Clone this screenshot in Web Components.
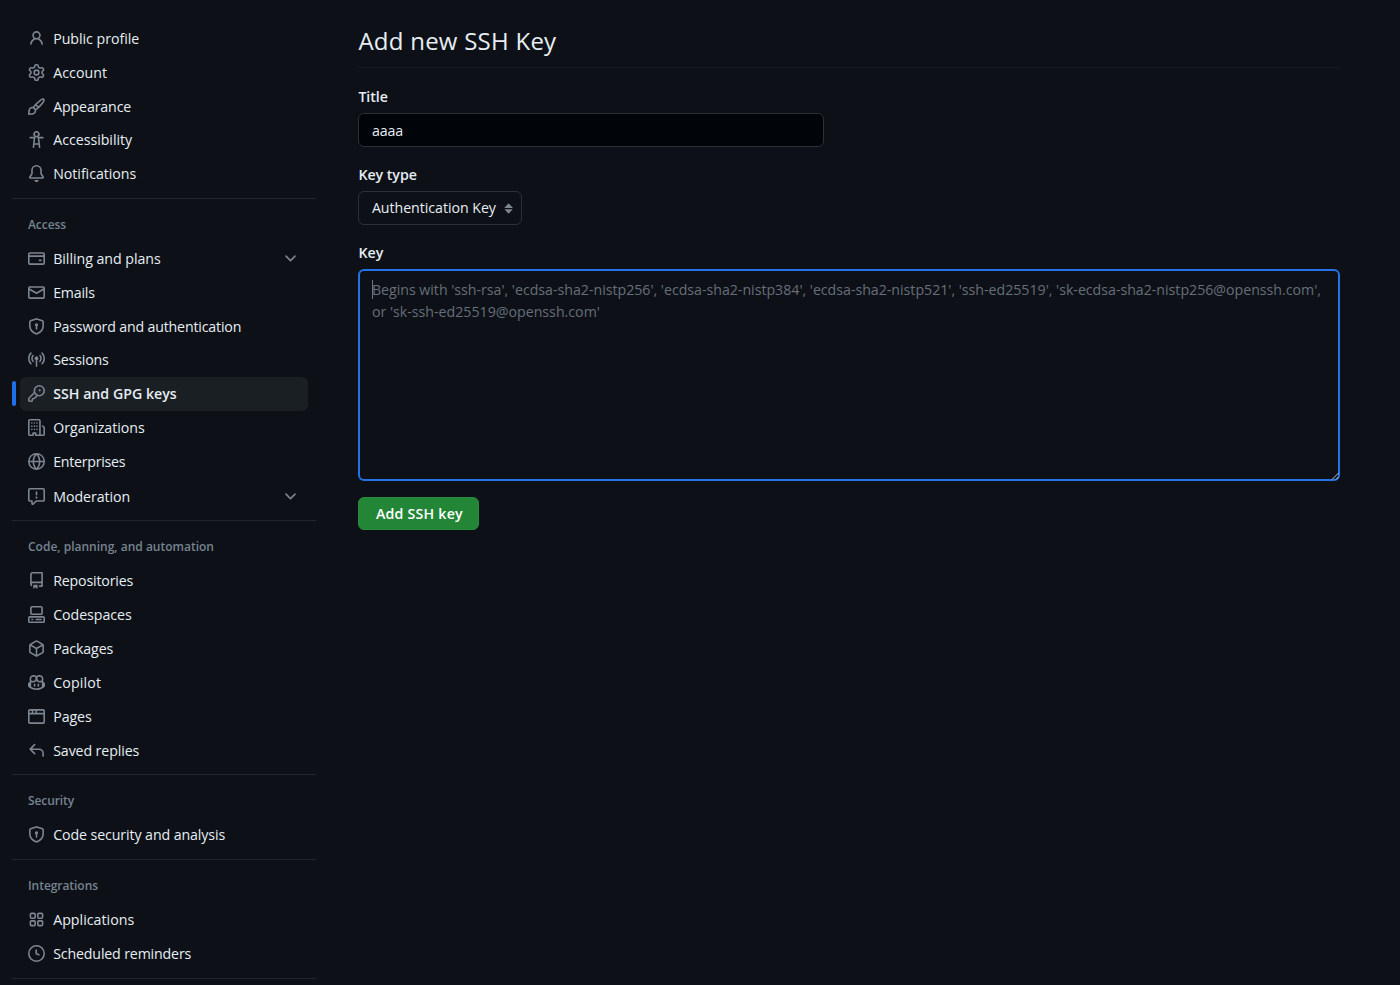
<!DOCTYPE html>
<html lang="en">
<head>
<meta charset="utf-8">
<title>Add new SSH key</title>
<style>
  body {
    margin: 0;
    height: 985px;
    overflow: hidden;
    background: #0d1117;
    color: #e6edf3;
    font-family: "Open Sans", "Noto Sans", sans-serif;
    font-size: 14.2px;
  }
</style>
</head>
<body>
<settings-page>
  <settings-nav slot="nav">
    <nav-group>
      <nav-item icon="person" fit="86">Public profile</nav-item>
      <nav-item icon="gear" fit="54">Account</nav-item>
      <nav-item icon="paintbrush" fit="78">Appearance</nav-item>
      <nav-item icon="accessibility" fit="79">Accessibility</nav-item>
      <nav-item icon="bell" fit="83">Notifications</nav-item>
    </nav-group>
    <nav-group heading="Access" fit="38">
      <nav-item icon="credit-card" fit="107.5" expandable>Billing and plans</nav-item>
      <nav-item icon="mail" fit="41.5">Emails</nav-item>
      <nav-item icon="shield-lock" fit="188">Password and authentication</nav-item>
      <nav-item icon="broadcast" fit="55.5">Sessions</nav-item>
      <nav-item icon="key" fit="123.5" current>SSH and GPG keys</nav-item>
      <nav-item icon="organization" fit="91.5">Organizations</nav-item>
      <nav-item icon="globe" fit="72">Enterprises</nav-item>
      <nav-item class="last" icon="report" fit="77" expandable>Moderation</nav-item>
    </nav-group>
    <nav-group heading="Code, planning, and automation" fit="186">
      <nav-item icon="repo" fit="80">Repositories</nav-item>
      <nav-item icon="codespaces" fit="78.5">Codespaces</nav-item>
      <nav-item icon="package" fit="60">Packages</nav-item>
      <nav-item icon="copilot" fit="48">Copilot</nav-item>
      <nav-item icon="browser" fit="38.5">Pages</nav-item>
      <nav-item icon="reply" fit="86">Saved replies</nav-item>
    </nav-group>
    <nav-group heading="Security" fit="46">
      <nav-item icon="shield-lock" fit="172">Code security and analysis</nav-item>
    </nav-group>
    <nav-group heading="Integrations" fit="70">
      <nav-item icon="apps" fit="81">Applications</nav-item>
      <nav-item icon="clock" fit="138">Scheduled reminders</nav-item>
    </nav-group>
  </settings-nav>
  <ssh-key-form></ssh-key-form>
</settings-page>

<script>
const ICONS = {
  "person": "M10.561 8.073a6.005 6.005 0 0 1 3.432 5.142.75.75 0 1 1-1.498.07 4.5 4.5 0 0 0-8.99 0 .75.75 0 0 1-1.498-.07 6.004 6.004 0 0 1 3.431-5.142 3.999 3.999 0 1 1 5.123 0ZM10.5 5a2.5 2.5 0 1 0-5 0 2.5 2.5 0 0 0 5 0Z",
  "gear": "M8 0a8.2 8.2 0 0 1 .701.031C9.444.095 9.99.645 10.16 1.29l.288 1.107c.018.066.079.158.212.224.231.114.454.243.668.386.123.082.233.09.299.071l1.103-.303c.644-.176 1.392.021 1.82.63.27.385.506.792.704 1.218.315.675.111 1.422-.364 1.891l-.814.806c-.049.048-.098.147-.088.294.016.257.016.515 0 .772-.01.147.038.246.088.294l.814.806c.475.469.679 1.216.364 1.891a7.977 7.977 0 0 1-.704 1.217c-.428.61-1.176.807-1.82.63l-1.102-.302c-.067-.019-.177-.011-.3.071a5.909 5.909 0 0 1-.668.386c-.133.066-.194.158-.211.224l-.29 1.106c-.168.646-.715 1.196-1.458 1.26a8.006 8.006 0 0 1-1.402 0c-.743-.064-1.289-.614-1.458-1.26l-.289-1.106c-.018-.066-.079-.158-.212-.224a5.738 5.738 0 0 1-.668-.386c-.123-.082-.233-.09-.299-.071l-1.103.303c-.644.176-1.392-.021-1.82-.63a8.12 8.12 0 0 1-.704-1.218c-.315-.675-.111-1.422.363-1.891l.815-.806c.05-.048.098-.147.088-.294a6.214 6.214 0 0 1 0-.772c.01-.147-.038-.246-.088-.294l-.815-.806C.635 6.045.431 5.298.746 4.623a7.92 7.92 0 0 1 .704-1.217c.428-.61 1.176-.807 1.82-.63l1.102.302c.067.019.177.011.3-.071.214-.143.437-.272.668-.386.133-.066.194-.158.211-.224l.29-1.106C6.009.645 6.556.095 7.299.03 7.53.01 7.764 0 8 0Zm-.571 1.525c-.036.003-.108.036-.137.146l-.289 1.105c-.147.561-.549.967-.998 1.189-.173.086-.34.183-.5.29-.417.278-.97.423-1.529.27l-1.103-.303c-.109-.03-.175.016-.195.045-.22.312-.412.644-.573.99-.014.031-.021.11.059.19l.815.806c.411.406.562.957.53 1.456a4.709 4.709 0 0 0 0 .582c.032.499-.119 1.05-.53 1.456l-.815.806c-.081.08-.073.159-.059.19.162.346.353.677.573.989.02.03.085.076.195.046l1.102-.303c.56-.153 1.113-.008 1.53.27.161.107.328.204.501.29.447.222.85.629.997 1.189l.289 1.105c.029.109.101.143.137.146a6.6 6.6 0 0 0 1.142 0c.036-.003.108-.036.137-.146l.289-1.105c.147-.561.549-.967.998-1.189.173-.086.34-.183.5-.29.417-.278.97-.423 1.529-.27l1.103.303c.109.029.175-.016.195-.045.22-.313.411-.644.573-.99.014-.031.021-.11-.059-.19l-.815-.806c-.411-.406-.562-.957-.53-1.456a4.709 4.709 0 0 0 0-.582c-.032-.499.119-1.05.53-1.456l.815-.806c.081-.08.073-.159.059-.19a6.464 6.464 0 0 0-.573-.989c-.02-.03-.085-.076-.195-.046l-1.102.303c-.56.153-1.113.008-1.53-.27a4.44 4.44 0 0 0-.501-.29c-.447-.222-.85-.629-.997-1.189l-.289-1.105c-.029-.11-.101-.143-.137-.146a6.6 6.6 0 0 0-1.142 0ZM11 8a3 3 0 1 1-6 0 3 3 0 0 1 6 0ZM9.5 8a1.5 1.5 0 1 0-3.001.001A1.5 1.5 0 0 0 9.5 8Z",
  "paintbrush": "M11.134 1.535c.7-.509 1.416-.942 2.076-1.155.649-.21 1.463-.267 2.069.34.603.601.568 1.411.368 2.07-.202.668-.624 1.39-1.125 2.096-1.011 1.424-2.496 2.987-3.775 4.249-1.098 1.084-2.132 1.839-3.04 2.3a3.744 3.744 0 0 1-1.055 3.217c-.431.431-1.065.691-1.657.861-.614.177-1.294.287-1.914.357A21.151 21.151 0 0 1 .797 16H.743a.75.75 0 0 1-.742-.743v-.054a21.25 21.25 0 0 1 .13-2.284c.067-.647.187-1.287.358-1.914.17-.591.43-1.226.86-1.657a3.746 3.746 0 0 1 3.227-1.054c.466-.893 1.225-1.907 2.314-2.982 1.271-1.255 2.833-2.75 4.245-3.777ZM1.62 13.089c-.051.464-.086.929-.104 1.395.466-.018.932-.053 1.396-.104a10.511 10.511 0 0 0 1.668-.309c.526-.151.856-.325 1.011-.48a2.25 2.25 0 1 0-3.182-3.182c-.155.155-.329.485-.48 1.01a10.515 10.515 0 0 0-.309 1.67Zm10.396-10.34c-1.224.89-2.605 2.189-3.822 3.384l1.718 1.718c1.21-1.205 2.51-2.597 3.387-3.833.47-.662.78-1.227.912-1.662.134-.444.032-.551.009-.575h-.001V1.78c-.014-.014-.113-.113-.548.027-.432.14-.995.462-1.655.942Zm-4.832 7.266-.001.001a9.859 9.859 0 0 0 1.63-1.142L7.155 7.216a9.7 9.7 0 0 0-1.161 1.607c.482.302.889.71 1.19 1.192Z",
  "accessibility": "M9.923 5.302c.063.063.122.129.178.198H14A.75.75 0 0 1 14 7h-3.3l.578 5.163.362 2.997a.75.75 0 0 1-1.49.18L9.868 13H6.132l-.282 2.34a.75.75 0 0 1-1.49-.18l.362-2.997L5.3 7H2a.75.75 0 0 1 0-1.5h3.9a2.54 2.54 0 0 1 .176-.198 3 3 0 1 1 3.847 0ZM9.2 7.073h-.001a1.206 1.206 0 0 0-2.398 0L6.305 11.5h3.39ZM9.5 3a1.5 1.5 0 1 0-3.001.001A1.5 1.5 0 0 0 9.5 3Z",
  "bell": "M8 16a2 2 0 0 0 1.985-1.75c.017-.137-.097-.25-.235-.25h-3.5c-.138 0-.252.113-.235.25A2 2 0 0 0 8 16ZM3 5a5 5 0 0 1 10 0v2.947c0 .05.015.098.042.139l1.703 2.555A1.519 1.519 0 0 1 13.482 13H2.518a1.516 1.516 0 0 1-1.263-2.36l1.703-2.554A.255.255 0 0 0 3 7.947Zm5-3.5A3.5 3.5 0 0 0 4.5 5v2.947c0 .346-.102.683-.294.97l-1.703 2.556a.017.017 0 0 0-.003.01l.001.006c0 .002.002.004.004.006l.006.004.007.001h10.964l.007-.001.006-.004.004-.006.001-.007a.017.017 0 0 0-.003-.01l-1.703-2.554a1.745 1.745 0 0 1-.294-.97V5A3.5 3.5 0 0 0 8 1.5Z",
  "credit-card": "M10.75 9a.75.75 0 0 0 0 1.5h1.5a.75.75 0 0 0 0-1.5h-1.5ZM0 3.75C0 2.784.784 2 1.75 2h12.5c.966 0 1.75.784 1.75 1.75v8.5A1.75 1.75 0 0 1 14.25 14H1.75A1.75 1.75 0 0 1 0 12.25ZM14.5 6.5h-13v5.75c0 .138.112.25.25.25h12.5a.25.25 0 0 0 .25-.25Zm0-2.75a.25.25 0 0 0-.25-.25H1.75a.25.25 0 0 0-.25.25V5h13Z",
  "mail": "M1.75 2h12.5c.966 0 1.75.784 1.75 1.75v8.5A1.75 1.75 0 0 1 14.25 14H1.75A1.75 1.75 0 0 1 0 12.25v-8.5C0 2.784.784 2 1.75 2ZM1.5 12.251c0 .138.112.25.25.25h12.5a.25.25 0 0 0 .25-.25V5.809L8.38 9.397a.75.75 0 0 1-.76 0L1.5 5.809v6.442Zm13-8.181v-.32a.25.25 0 0 0-.25-.25H1.75a.25.25 0 0 0-.25.25v.32L8 7.88Z",
  "shield-lock": "m8.533.133 5.25 1.68A1.75 1.75 0 0 1 15 3.48V7c0 1.566-.32 3.182-1.303 4.682-.983 1.498-2.585 2.813-5.032 3.855a1.697 1.697 0 0 1-1.33 0c-2.447-1.042-4.049-2.357-5.032-3.855C1.32 10.182 1 8.566 1 7V3.48a1.75 1.75 0 0 1 1.217-1.667l5.25-1.68a1.748 1.748 0 0 1 1.066 0Zm-.61 1.429.001.001-5.25 1.68a.251.251 0 0 0-.174.237V7c0 1.36.275 2.666 1.057 3.859.784 1.194 2.121 2.342 4.366 3.298a.196.196 0 0 0 .154 0c2.245-.957 3.582-2.103 4.366-3.297C13.225 9.666 13.5 8.358 13.5 7V3.48a.25.25 0 0 0-.174-.238l-5.25-1.68a.25.25 0 0 0-.153 0ZM9.5 6.5c0 .536-.286 1.032-.75 1.3v2.45a.75.75 0 0 1-1.5 0V7.8A1.5 1.5 0 1 1 9.5 6.5Z",
  "broadcast": "M8.75 8.582v5.668a.75.75 0 0 1-1.5 0V8.582a1.75 1.75 0 1 1 1.5 0Zm3.983-7.125a.75.75 0 0 1 1.06.026A7.976 7.976 0 0 1 16 7c0 2.139-.84 4.083-2.207 5.517a.75.75 0 1 1-1.086-1.034A6.474 6.474 0 0 0 14.5 7a6.474 6.474 0 0 0-1.793-4.483.75.75 0 0 1 .026-1.06Zm-9.466 0c.3.286.312.76.026 1.06A6.474 6.474 0 0 0 1.5 7a6.47 6.47 0 0 0 1.793 4.483.75.75 0 0 1-1.086 1.034A7.973 7.973 0 0 1 0 7c0-2.139.84-4.083 2.207-5.517a.75.75 0 0 1 1.06-.026Zm8.556 2.321A4.988 4.988 0 0 1 13 7a4.988 4.988 0 0 1-1.177 3.222.75.75 0 1 1-1.146-.967A3.487 3.487 0 0 0 11.5 7c0-.86-.309-1.645-.823-2.255a.75.75 0 0 1 1.146-.967Zm-6.492.958A3.48 3.48 0 0 0 4.5 7a3.48 3.48 0 0 0 .823 2.255.75.75 0 0 1-1.146.967A4.981 4.981 0 0 1 3 7a4.982 4.982 0 0 1 1.188-3.236.75.75 0 1 1 1.143.972Z",
  "organization": "M1.75 16A1.75 1.75 0 0 1 0 14.25V1.75C0 .784.784 0 1.75 0h8.5C11.216 0 12 .784 12 1.75v12.5c0 .085-.006.168-.018.25h2.268a.25.25 0 0 0 .25-.25V8.285a.25.25 0 0 0-.111-.208l-1.055-.703a.749.749 0 1 1 .832-1.248l1.055.703c.487.325.779.871.779 1.456v5.965A1.75 1.75 0 0 1 14.25 16h-3.5a.766.766 0 0 1-.197-.026c-.099.017-.2.026-.303.026h-3a.75.75 0 0 1-.75-.75V14h-1v1.25a.75.75 0 0 1-.75.75Zm-.25-1.75c0 .138.112.25.25.25H4v-1.25a.75.75 0 0 1 .75-.75h2.5a.75.75 0 0 1 .75.75v1.25h2.25a.25.25 0 0 0 .25-.25V1.75a.25.25 0 0 0-.25-.25h-8.5a.25.25 0 0 0-.25.25Z",
  "globe": "M8 0a8 8 0 1 1 0 16A8 8 0 0 1 8 0ZM5.78 8.75a9.64 9.64 0 0 0 1.363 4.177c.255.426.542.832.857 1.215.245-.296.551-.705.857-1.215A9.64 9.64 0 0 0 10.22 8.75Zm4.44-1.5a9.64 9.64 0 0 0-1.363-4.177c-.307-.51-.612-.919-.857-1.215a9.927 9.927 0 0 0-.857 1.215A9.64 9.64 0 0 0 5.78 7.25Zm-5.944 1.5H1.543a6.507 6.507 0 0 0 4.666 5.5c-.123-.181-.24-.365-.352-.552-.715-1.192-1.437-2.874-1.581-4.948Zm-2.733-1.5h2.733c.144-2.074.866-3.756 1.58-4.948.12-.197.237-.381.353-.552a6.507 6.507 0 0 0-4.666 5.5Zm10.181 1.5c-.144 2.074-.866 3.756-1.58 4.948-.12.197-.237.381-.353.552a6.507 6.507 0 0 0 4.666-5.5Zm2.733-1.5a6.507 6.507 0 0 0-4.666-5.5c.123.181.24.365.353.552.714 1.192 1.436 2.874 1.58 4.948Z",
  "report": "M0 1.75C0 .784.784 0 1.75 0h12.5C15.216 0 16 .784 16 1.75v9.5A1.75 1.75 0 0 1 14.25 13H8.06l-2.573 2.573A1.458 1.458 0 0 1 3 14.543V13H1.75A1.75 1.75 0 0 1 0 11.25Zm1.75-.25a.25.25 0 0 0-.25.25v9.5c0 .138.112.25.25.25h2a.75.75 0 0 1 .75.75v2.19l2.72-2.72a.749.749 0 0 1 .53-.22h6.5a.25.25 0 0 0 .25-.25v-9.5a.25.25 0 0 0-.25-.25Zm7 2.25v2.5a.75.75 0 0 1-1.5 0v-2.5a.75.75 0 0 1 1.5 0ZM9 9a1 1 0 1 1-2 0 1 1 0 0 1 2 0Z",
  "repo": "M2 2.5A2.5 2.5 0 0 1 4.5 0h8.75a.75.75 0 0 1 .75.75v12.5a.75.75 0 0 1-.75.75h-2.5a.75.75 0 0 1 0-1.5h1.75v-2h-8a1 1 0 0 0-.714 1.7.75.75 0 1 1-1.072 1.05A2.495 2.495 0 0 1 2 11.5Zm10.5-1h-8a1 1 0 0 0-1 1v6.708A2.486 2.486 0 0 1 4.5 9h8ZM5 12.25a.25.25 0 0 1 .25-.25h3.5a.25.25 0 0 1 .25.25v3.25a.25.25 0 0 1-.4.2l-1.45-1.087a.249.249 0 0 0-.3 0L5.4 15.7a.25.25 0 0 1-.4-.2Z",
  "codespaces": "M0 11.25c0-.966.784-1.75 1.75-1.75h12.5c.966 0 1.75.784 1.75 1.75v3A1.75 1.75 0 0 1 14.25 16H1.75A1.75 1.75 0 0 1 0 14.25Zm2-9.5C2 .784 2.784 0 3.75 0h8.5C13.216 0 14 .784 14 1.75v5a1.75 1.75 0 0 1-1.75 1.75h-8.5A1.75 1.75 0 0 1 2 6.75Zm1.75-.25a.25.25 0 0 0-.25.25v5c0 .138.112.25.25.25h8.5a.25.25 0 0 0 .25-.25v-5a.25.25 0 0 0-.25-.25Zm-2 9.5a.25.25 0 0 0-.25.25v3c0 .138.112.25.25.25h12.5a.25.25 0 0 0 .25-.25v-3a.25.25 0 0 0-.25-.25ZM7 12.75a.75.75 0 0 1 .75-.75h4.5a.75.75 0 0 1 0 1.5h-4.5a.75.75 0 0 1-.75-.75Zm-4 0a.75.75 0 0 1 .75-.75h.5a.75.75 0 0 1 0 1.5h-.5a.75.75 0 0 1-.75-.75Z",
  "package": "m8.878.392 5.25 3.045c.54.314.872.89.872 1.514v6.098a1.75 1.75 0 0 1-.872 1.514l-5.25 3.045a1.75 1.75 0 0 1-1.756 0l-5.25-3.045A1.75 1.75 0 0 1 1 11.049V4.951c0-.624.332-1.201.872-1.514L7.122.392a1.75 1.75 0 0 1 1.756 0ZM7.875 1.69l-4.63 2.685L8 7.133l4.755-2.758-4.63-2.685a.248.248 0 0 0-.25 0ZM2.5 5.677v5.372c0 .09.047.171.125.216l4.625 2.683V8.432Zm6.25 8.271 4.625-2.683a.25.25 0 0 0 .125-.216V5.677L8.75 8.432Z",
  "copilot": "M7.998 15.035c-4.562 0-7.873-2.914-7.998-3.749V9.338c.085-.628.677-1.686 1.588-2.065.013-.07.024-.143.036-.218.029-.183.06-.384.126-.612-.201-.508-.254-1.084-.254-1.656 0-.87.128-1.769.693-2.484.579-.733 1.494-1.124 2.724-1.261 1.206-.134 2.262.034 2.944.765.05.053.096.108.139.165.044-.057.094-.112.143-.165.682-.731 1.738-.899 2.944-.765 1.23.137 2.145.528 2.724 1.261.566.715.693 1.614.693 2.484 0 .572-.053 1.148-.254 1.656.066.228.098.429.126.612.012.076.024.148.037.218.924.385 1.522 1.471 1.591 2.095v1.872c0 .766-3.351 3.795-8.002 3.795Zm0-1.485c2.28 0 4.584-1.11 5.002-1.433V7.862l-.023-.116c-.49.21-1.075.291-1.727.291-1.146 0-2.059-.327-2.71-.991A3.222 3.222 0 0 1 8 6.303a3.24 3.24 0 0 1-.544.743c-.65.664-1.563.991-2.71.991-.652 0-1.236-.081-1.727-.291l-.023.116v4.255c.419.323 2.722 1.433 5.002 1.433ZM6.762 2.83c-.193-.206-.637-.413-1.682-.297-1.019.113-1.479.404-1.713.7-.247.312-.369.789-.369 1.554 0 .793.129 1.171.308 1.371.162.181.519.379 1.442.379.853 0 1.339-.235 1.638-.54.315-.322.527-.827.617-1.553.117-.935-.037-1.395-.241-1.614Zm4.155-.297c-1.044-.116-1.488.091-1.681.297-.204.219-.359.679-.242 1.614.091.726.303 1.231.618 1.553.299.305.784.54 1.638.54.922 0 1.28-.198 1.442-.379.179-.2.308-.578.308-1.371 0-.765-.123-1.242-.37-1.554-.233-.296-.693-.587-1.713-.7ZM6.25 9.037a.75.75 0 0 1 .75.75v1.501a.75.75 0 0 1-1.5 0V9.787a.75.75 0 0 1 .75-.75Zm4.25.75v1.501a.75.75 0 0 1-1.5 0V9.787a.75.75 0 0 1 1.5 0Z",
  "browser": "M0 2.75C0 1.784.784 1 1.75 1h12.5c.966 0 1.75.784 1.75 1.75v10.5A1.75 1.75 0 0 1 14.25 15H1.75A1.75 1.75 0 0 1 0 13.25ZM14.5 6h-13v7.25c0 .138.112.25.25.25h12.5a.25.25 0 0 0 .25-.25Zm-6-3.5v2h6V2.75a.25.25 0 0 0-.25-.25ZM5 2.5v2h2v-2Zm-3.25 0a.25.25 0 0 0-.25.25V4.5h2v-2Z",
  "reply": "M6.78 1.97a.75.75 0 0 1 0 1.06L3.81 6h6.44A4.75 4.75 0 0 1 15 10.75v2.5a.75.75 0 0 1-1.5 0v-2.5a3.25 3.25 0 0 0-3.25-3.25H3.81l2.97 2.97a.749.749 0 0 1-.326 1.275.749.749 0 0 1-.734-.215L1.47 7.28a.75.75 0 0 1 0-1.06l4.25-4.25a.75.75 0 0 1 1.06 0Z",
  "apps": "M1.5 3.25c0-.966.784-1.75 1.75-1.75h2.5c.966 0 1.75.784 1.75 1.75v2.5A1.75 1.75 0 0 1 5.75 7.5h-2.5A1.75 1.75 0 0 1 1.5 5.75ZM3 3.25v2.5c0 .138.112.25.25.25h2.5A.25.25 0 0 0 6 5.75v-2.5A.25.25 0 0 0 5.75 3h-2.5a.25.25 0 0 0-.25.25Zm5.5 0c0-.966.784-1.75 1.75-1.75h2.5c.966 0 1.75.784 1.75 1.75v2.5a1.75 1.75 0 0 1-1.75 1.75h-2.5A1.75 1.75 0 0 1 8.5 5.75Zm1.5 0v2.5c0 .138.112.25.25.25h2.5a.25.25 0 0 0 .25-.25v-2.5a.25.25 0 0 0-.25-.25h-2.5a.25.25 0 0 0-.25.25Zm-8.5 7c0-.966.784-1.75 1.75-1.75h2.5c.966 0 1.75.784 1.75 1.75v2.5a1.75 1.75 0 0 1-1.75 1.75h-2.5a1.75 1.75 0 0 1-1.75-1.75Zm1.5 0v2.5c0 .138.112.25.25.25h2.5a.25.25 0 0 0 .25-.25v-2.5a.25.25 0 0 0-.25-.25h-2.5a.25.25 0 0 0-.25.25Zm5.5 0c0-.966.784-1.75 1.75-1.75h2.5c.966 0 1.75.784 1.75 1.75v2.5a1.75 1.75 0 0 1-1.75 1.75h-2.5a1.75 1.75 0 0 1-1.75-1.75Zm1.5 0v2.5c0 .138.112.25.25.25h2.5a.25.25 0 0 0 .25-.25v-2.5a.25.25 0 0 0-.25-.25h-2.5a.25.25 0 0 0-.25.25Z",
  "clock": "M8 0a8 8 0 1 1 0 16A8 8 0 0 1 8 0ZM1.5 8a6.5 6.5 0 1 0 13 0 6.5 6.5 0 0 0-13 0Zm7-3.25v2.992l2.028.812a.75.75 0 0 1-.557 1.392l-2.5-1A.751.751 0 0 1 7 8.25v-3.5a.75.75 0 0 1 1.5 0Z",
  "chevron-down": "M12.78 5.22a.749.749 0 0 1 0 1.06l-4.25 4.25a.749.749 0 0 1-1.06 0L3.22 6.28a.749.749 0 1 1 1.06-1.06L8 8.939l3.72-3.719a.749.749 0 0 1 1.06 0Z",
  "select-arrows": "m4.074 9.427 3.396 3.396a.25.25 0 0 0 .354 0l3.396-3.396A.25.25 0 0 0 11.043 9H4.251a.25.25 0 0 0-.177.427ZM4.074 7.47 7.47 4.073a.25.25 0 0 1 .354 0L11.22 7.47a.25.25 0 0 1-.177.426H4.251a.25.25 0 0 1-.177-.426Z"
};

// Stroked or dotted parts that go on top of the filled path
const EXTRAS = {
  "key": `
    <g fill="none" stroke="currentColor" stroke-width="1.5" stroke-linecap="round" stroke-linejoin="round">
      <circle cx="10.6" cy="5.4" r="4.65"/>
      <path d="M6.2 7.1 1.25 12.05a1.7 1.7 0 0 0-.5 1.2v1a1 1 0 0 0 1 1h1.3a1 1 0 0 0 1-1v-.6a.9.9 0 0 1 .9-.9h.5a1 1 0 0 0 .7-.3L8.9 9.8"/>
    </g>
    <circle cx="11" cy="5" r="1"/>`,
  "organization": [3.75, 6.75, 9.75].map((y) => [3.6, 6, 8.4].map((x) => `<circle cx="${x}" cy="${y}" r=".78"/>`).join("")).join("")
};

const attach = (el, html) => {
  const template = document.createElement("template");
  template.innerHTML = html;
  el.attachShadow({ mode: "open" });
  el.shadowRoot.appendChild(template.content.cloneNode(true));
};

// Spread a label's letters so it takes up the given width
const fitText = (span, width) => {
  if (!width) return;
  const count = (span.dataset.chars || span.textContent).length;
  const natural = span.getBoundingClientRect().width;
  span.style.letterSpacing = `${(width - natural) / count}px`;
};

class OctIcon extends HTMLElement {
  connectedCallback() {
    if (this.shadowRoot) return;
    const name = this.getAttribute("name");
    attach(this, `
      <style>
        :host { display: block; width: 17px; height: 17px; flex: none; }
        svg { display: block; width: 100%; height: 100%; fill: currentColor; }
      </style>
      <svg viewBox="0 0 16 16" aria-hidden="true">
        <path fill-rule="evenodd" d="${ICONS[name] || ""}"/>
        ${EXTRAS[name] || ""}
      </svg>
    `);
  }
}

class SettingsPage extends HTMLElement {
  constructor() {
    super();
    attach(this, `
      <style>
        :host { display: flex; gap: 42.4px; padding: 0 60px 0 12px; }
        main { flex: 1; min-width: 0; }
      </style>
      <slot name="nav"></slot>
      <main><slot></slot></main>
    `);
  }
}

class SettingsNav extends HTMLElement {
  constructor() {
    super();
    attach(this, `
      <style>
        :host { display: block; width: 304px; flex: none; padding-top: 21.4px; }
        ::slotted(nav-group) { display: block; }
      </style>
      <nav><slot></slot></nav>
    `);
  }
}

class NavGroup extends HTMLElement {
  constructor() {
    super();
    const heading = this.getAttribute("heading");
    attach(this, `
      <style>
        :host { display: block; border-bottom: 1px solid #21262d; padding-bottom: 7.3px; margin-bottom: 8px; }
        h3 {
          margin: 0;
          height: 34.5px;
          padding: 0 16px;
          box-sizing: border-box;
          line-height: 36px;
          font-size: 12px;
          font-weight: 600;
          color: #768390;
          white-space: nowrap;
        }
        ::slotted(.last) { padding-top: 0.8px; }
      </style>
      ${heading ? `<h3><span>${heading}</span></h3>` : ""}
      <slot></slot>
    `);
  }
  connectedCallback() {
    const span = this.shadowRoot.querySelector("h3 span");
    if (span) fitText(span, this.getAttribute("fit"));
  }
}

class NavItem extends HTMLElement {
  constructor() {
    super();
    attach(this, `
      <style>
        :host { display: flex; align-items: center; height: 33.86px; }
        .marker { width: 4px; height: 25px; margin: 0 4.4px 0 -0.5px; border-radius: 6px; flex: none; }
        .row {
          display: flex;
          align-items: center;
          flex: 1;
          height: 100%;
          margin-right: 8.5px;
          padding: 0 8.5px 0 8px;
          border-radius: 6px;
          white-space: nowrap;
        }
        oct-icon { color: #7d8590; margin-right: 8.3px; }
        .chevron { margin: 0 0 0 auto; }
        :host([current]) { font-weight: 600; }
        :host([current]) .marker { background: #1f6feb; }
        :host([current]) .row { background: #1a1f23; }
      </style>
      <div class="marker"></div>
      <div class="row">
        <oct-icon name="${this.getAttribute("icon")}"></oct-icon>
        <span><slot></slot></span>
        ${this.hasAttribute("expandable") ? `<oct-icon class="chevron" name="chevron-down"></oct-icon>` : ""}
      </div>
    `);
  }
  connectedCallback() {
    const span = this.shadowRoot.querySelector("span");
    span.dataset.chars = this.textContent;
    fitText(span, this.getAttribute("fit"));
  }
}

class FormField extends HTMLElement {
  constructor() {
    super();
    attach(this, `
      <style>
        :host { display: block; }
        label { display: block; height: 22px; line-height: 22px; margin-bottom: 5px; font-weight: 600; }
      </style>
      <label><span>${this.getAttribute("label")}</span></label>
      <slot></slot>
    `);
  }
  connectedCallback() {
    fitText(this.shadowRoot.querySelector("span"), this.getAttribute("fit"));
  }
}

class SshKeyForm extends HTMLElement {
  constructor() {
    super();
    attach(this, `
      <style>
        :host { display: block; padding-top: 22px; }
        h2 {
          margin: 0 0 18px;
          height: 46px;
          line-height: 38px;
          box-sizing: border-box;
          border-bottom: 1px solid #161b21;
          font-size: 24px;
          font-weight: 400;
        }
        .input, .select, .textarea { box-sizing: border-box; border: 1px solid #2b3037; border-radius: 6px; }
        .input {
          width: 466px;
          height: 34px;
          padding: 0 12.5px;
          line-height: 33px;
          background: #010409;
        }
        .select {
          display: flex;
          align-items: center;
          justify-content: space-between;
          width: 164px;
          height: 34px;
          padding: 0 3.5px 0 12.5px;
          white-space: nowrap;
        }
        .select oct-icon { color: #7d8590; width: 18px; height: 18px; }
        .textarea {
          position: relative;
          height: 212px;
          padding: 8px 11.5px;
          line-height: 22.5px;
          border: 2px solid #2571e6;
          color: #666e79;
          white-space: nowrap;
        }
        .caret { position: absolute; left: 12px; top: 9px; width: 1px; height: 19px; background: #6e7681; }
        .grip { position: absolute; right: -1px; bottom: -1px; width: 8px; height: 8px; }
        form-field { margin-bottom: 16.5px; }
        form-field.select-field { margin-bottom: 17px; }
        button {
          display: block;
          width: 121px;
          height: 33px;
          padding: 0 0 0 1px;
          border: 1px solid #2a8a3d;
          border-radius: 6px;
          background: #238636;
          color: #fff;
          font: 600 14.2px "Open Sans", sans-serif;
        }
      </style>
      <h2><span data-fit="198">Add new SSH Key</span></h2>
      <form-field label="Title" fit="29.5">
        <div class="input"><span data-fit="31">aaaa</span></div>
      </form-field>
      <form-field class="select-field" label="Key type" fit="58.5">
        <div class="select"><span data-fit="124">Authentication Key</span><oct-icon name="select-arrows"></oct-icon></div>
      </form-field>
      <form-field label="Key" fit="25">
        <div class="textarea">
          <span data-fit="949">Begins with 'ssh-rsa', 'ecdsa-sha2-nistp256', 'ecdsa-sha2-nistp384', 'ecdsa-sha2-nistp521', 'ssh-ed25519', 'sk-ecdsa-sha2-nistp256@openssh.com',</span><br>
          <span data-fit="228">or 'sk-ssh-ed25519@openssh.com'</span>
          <i class="caret"></i>
          <svg class="grip" viewBox="0 0 8 8" stroke="#c0c4c9" stroke-width="1"><path d="M1 7.5 7.5 1M5 7.5 7.5 5"/></svg>
        </div>
      </form-field>
      <button type="button"><span data-fit="87">Add SSH key</span></button>
    `);
  }
  connectedCallback() {
    this.shadowRoot.querySelectorAll("[data-fit]").forEach((span) => fitText(span, span.dataset.fit));
  }
}

window.customElements.define("oct-icon", OctIcon);
window.customElements.define("settings-page", SettingsPage);
window.customElements.define("settings-nav", SettingsNav);
window.customElements.define("nav-group", NavGroup);
window.customElements.define("nav-item", NavItem);
window.customElements.define("form-field", FormField);
window.customElements.define("ssh-key-form", SshKeyForm);
</script>
</body>
</html>
